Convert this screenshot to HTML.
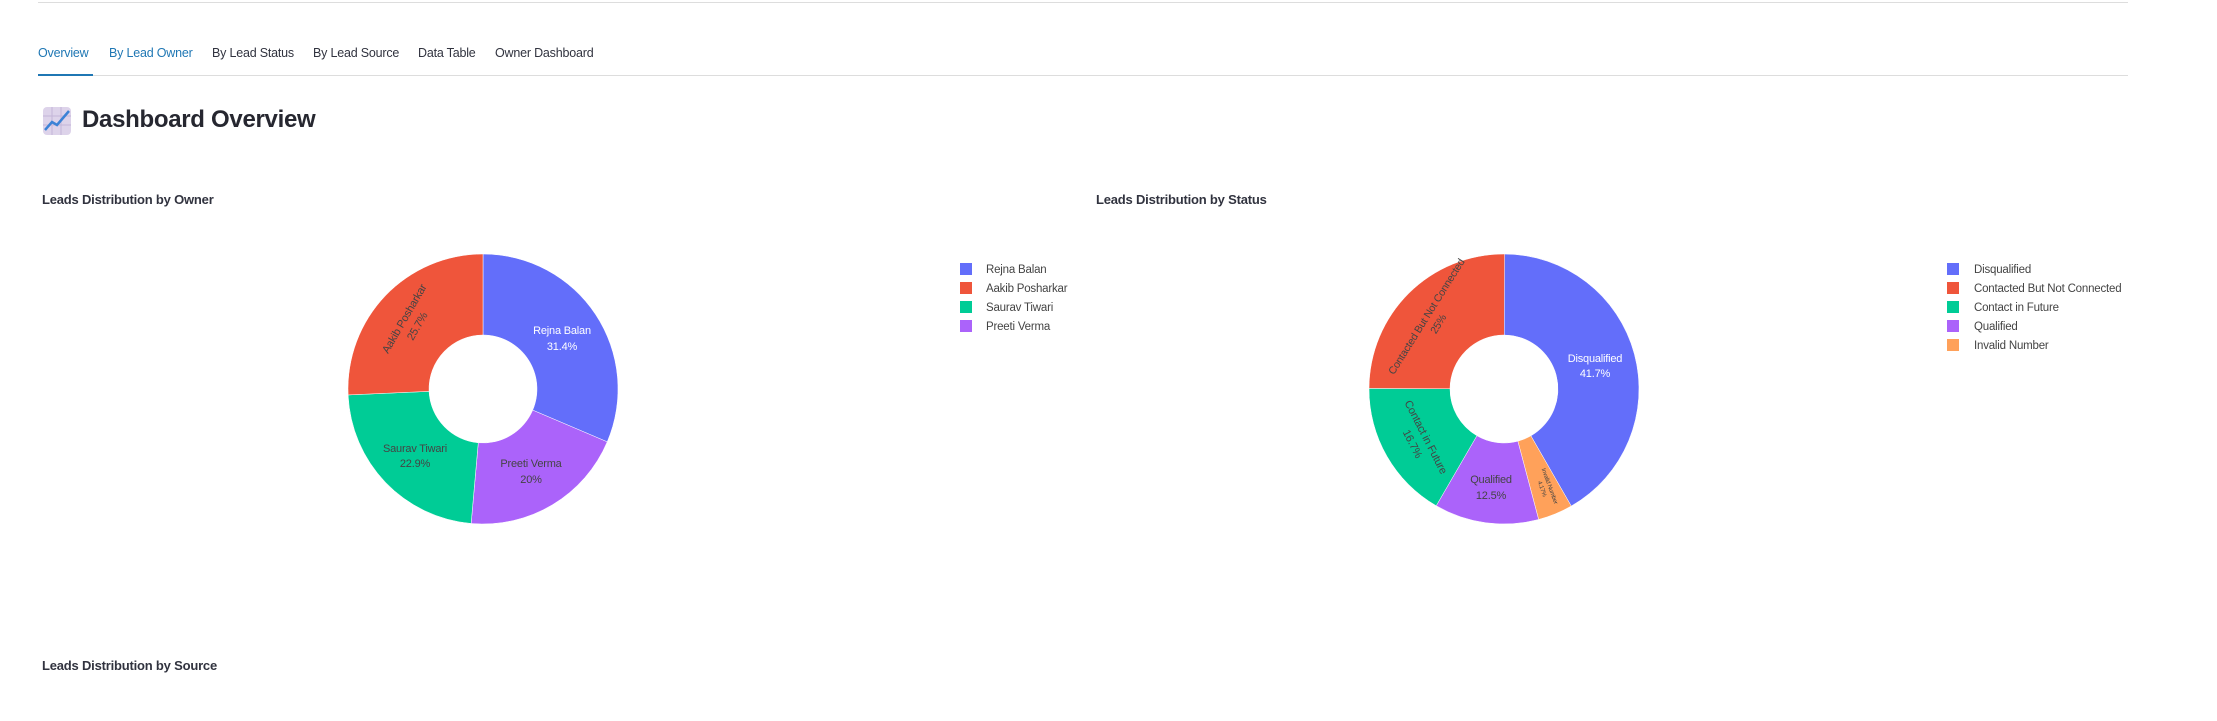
<!DOCTYPE html>
<html><head><meta charset="utf-8"><style>
body{margin:0;width:2217px;height:721px;background:#fff;font-family:"Liberation Sans",sans-serif;color:#31333f;position:relative;overflow:hidden}
.a{position:absolute;white-space:nowrap}
.tab{position:absolute;top:46px;font-size:12.5px;color:#31333f;letter-spacing:-0.2px}
h3{position:absolute;margin:0;font-size:13px;font-weight:bold;color:#31333f;letter-spacing:-0.2px}
</style></head><body>
<div class="a" style="left:38px;top:2px;width:2090px;height:1px;background:#ddd"></div>
<div class="tab" style="left:38px;color:#1f77b4">Overview</div>
<div class="tab" style="left:109px;color:#1f77b4">By Lead Owner</div>
<div class="tab" style="left:212px">By Lead Status</div>
<div class="tab" style="left:313px">By Lead Source</div>
<div class="tab" style="left:418px">Data Table</div>
<div class="tab" style="left:495px">Owner Dashboard</div>
<div class="a" style="left:38px;top:75px;width:2090px;height:1px;background:#ddd"></div>
<div class="a" style="left:38px;top:74px;width:55px;height:2px;background:#1f77b4"></div>
<svg class="a" style="left:43px;top:107px" width="28" height="28" viewBox="0 0 28 28"><rect x="0" y="0" width="28" height="28" rx="4" fill="#ddd3ea"/><path d="M0 9H28M0 18H28M9 0V28M18 0V28" stroke="#c4b6d8" stroke-width="1"/><path d="M2 23L9 15L14 18L26 4" stroke="#3b82d6" stroke-width="2.5" fill="none"/></svg>
<div class="a" style="left:82px;top:106px;font-size:24px;font-weight:bold;color:#262730;letter-spacing:-0.3px">Dashboard Overview</div>
<h3 style="left:42px;top:192px">Leads Distribution by Owner</h3>
<h3 style="left:1096px;top:192px">Leads Distribution by Status</h3>
<h3 style="left:42px;top:658px">Leads Distribution by Source</h3>
<svg class="a" id="s" style="left:0;top:0" width="2217" height="721" font-family="Liberation Sans, sans-serif">
<g id="p1"></g><g id="p2"></g>
<g font-size="11" text-anchor="middle" letter-spacing="-0.2">
<text x="562" y="334" fill="#fff">Rejna Balan</text><text x="562" y="350" fill="#fff">31.4%</text>
<text x="415" y="452" fill="#444">Saurav Tiwari</text><text x="415" y="467" fill="#444">22.9%</text>
<text x="531" y="467" fill="#444">Preeti Verma</text><text x="531" y="483" fill="#444">20%</text>
<g transform="translate(410,322) rotate(-60)" fill="#444"><text y="-3">Aakib Posharkar</text><text y="12">25.7%</text></g>
<text x="1595" y="362" fill="#fff">Disqualified</text><text x="1595" y="377" fill="#fff">41.7%</text>
<text x="1491" y="483" fill="#444">Qualified</text><text x="1491" y="499" fill="#444">12.5%</text>
<g transform="translate(1432,320) rotate(-58)" fill="#444" font-size="10.5"><text y="-3">Contacted But Not Connected</text><text y="11">25%</text></g>
<g transform="translate(1420,440) rotate(63)" fill="#444"><text y="-3">Contact in Future</text><text y="12">16.7%</text></g>
<g transform="translate(1547,487) rotate(70)" fill="#444" font-size="6"><text y="-1">Invalid Number</text><text y="7">4.17%</text></g>
</g>
<g font-size="11.5" fill="#444" letter-spacing="-0.2">
<rect x="960" y="263" width="12" height="12" fill="#636efa"/><text x="986" y="273">Rejna Balan</text>
<rect x="960" y="282" width="12" height="12" fill="#ef553b"/><text x="986" y="292">Aakib Posharkar</text>
<rect x="960" y="301" width="12" height="12" fill="#00cc96"/><text x="986" y="311">Saurav Tiwari</text>
<rect x="960" y="320" width="12" height="12" fill="#ab63fa"/><text x="986" y="330">Preeti Verma</text>
<rect x="1947" y="263" width="12" height="12" fill="#636efa"/><text x="1974" y="273">Disqualified</text>
<rect x="1947" y="282" width="12" height="12" fill="#ef553b"/><text x="1974" y="292">Contacted But Not Connected</text>
<rect x="1947" y="301" width="12" height="12" fill="#00cc96"/><text x="1974" y="311">Contact in Future</text>
<rect x="1947" y="320" width="12" height="12" fill="#ab63fa"/><text x="1974" y="330">Qualified</text>
<rect x="1947" y="339" width="12" height="12" fill="#ffa15a"/><text x="1974" y="349">Invalid Number</text>
</g>
</svg>
<script>
function pie(id,cx,cy,R,r,data){var g=document.getElementById(id),a=0,h='';data.forEach(function(d){var a0=a*2*Math.PI,a1=(a+d[0])*2*Math.PI;a+=d[0];
var p=function(rr,t){return (cx+rr*Math.sin(t)).toFixed(2)+' '+(cy-rr*Math.cos(t)).toFixed(2)};var l=(a1-a0)>Math.PI?1:0;
h+='<path d="M'+p(R,a0)+'A'+R+' '+R+' 0 '+l+' 1 '+p(R,a1)+'L'+p(r,a1)+'A'+r+' '+r+' 0 '+l+' 0 '+p(r,a0)+'Z" fill="'+d[1]+'" stroke="#fff" stroke-width="0.5"/>';});g.innerHTML=h;}
pie('p1',483,389,135,54,[[.314,'#636efa'],[.2,'#ab63fa'],[.229,'#00cc96'],[.257,'#ef553b']]);
pie('p2',1504,389,135,54,[[.417,'#636efa'],[.0417,'#ffa15a'],[.125,'#ab63fa'],[.167,'#00cc96'],[.25,'#ef553b']]);
</script>
</body></html>
